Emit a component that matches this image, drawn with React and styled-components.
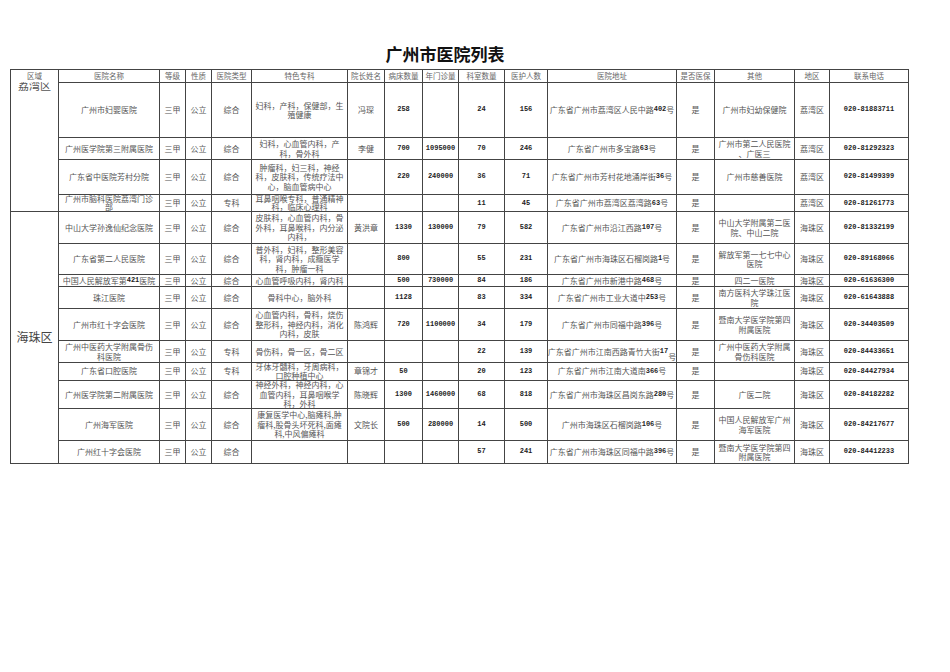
import React from 'react';
import styled, { createGlobalStyle } from 'styled-components';

const cols = [48, 101, 26, 26, 40, 96, 37, 38, 36, 46, 43, 129, 38, 80, 35, 79];

const headers = ['医院名称', '等级', '性质', '医院类型', '特色专科', '院长姓名', '病床数量', '年门诊量', '科室数量', '医护人数', '医院地址', '是否医保', '其他', '地区', '联系电话'];

const keys = ['name', 'level', 'kind', 'type', 'spec', 'head', 'beds', 'visits', 'depts', 'staff', 'addr', 'ins', 'other', 'area', 'tel'];
const numeric = ['beds', 'visits', 'depts', 'staff', 'tel'];

const liwan = [
  { h: 55, name: '广州市妇婴医院', type: '综合', spec: '妇科，产科，保健部，生\n殖健康', head: '冯琛', beds: '258', visits: '', depts: '24', staff: '156', addr: '广东省广州市荔湾区人民中路402号', other: '广州市妇幼保健院', area: '荔湾区', tel: '020-81883711' },
  { h: 22, name: '广州医学院第三附属医院', type: '综合', spec: '妇科，心血管内科，产\n科，骨外科', head: '李健', beds: '700', visits: '1095000', depts: '70', staff: '246', addr: '广东省广州市多宝路63号', other: '广州市第二人民医院\n、广医三', area: '荔湾区', tel: '020-81292323' },
  { h: 35, name: '广东省中医院芳村分院', type: '综合', spec: '肿瘤科，妇三科，神经\n科，皮肤科，传统疗法中\n心，脑血管病中心', head: '', beds: '220', visits: '240000', depts: '36', staff: '71', addr: '广东省广州市芳村花地涌岸街36号', other: '广州市慈善医院', area: '荔湾区', tel: '020-81499399' },
  { h: 17, lh: 8, name: '广州市脑科医院荔湾门诊\n部', type: '专科', spec: '耳鼻咽喉专科，普通精神\n科，临床心理科', head: '', beds: '', visits: '', depts: '11', staff: '45', addr: '广东省广州市荔湾区荔湾路63号', other: '', area: '荔湾区', tel: '020-81261773' },
];

const haizhu = [
  { h: 32, name: '中山大学孙逸仙纪念医院', type: '综合', spec: '皮肤科，心血管内科，骨\n外科，耳鼻喉科，内分泌\n内科，', head: '黄洪章', beds: '1330', visits: '130000', depts: '79', staff: '582', addr: '广东省广州市沿江西路107号', other: '中山大学附属第二医\n院、中山二院', area: '海珠区', tel: '020-81332199' },
  { h: 31, name: '广东省第二人民医院', type: '综合', spec: '普外科，妇科，整形美容\n科，肾内科，成瘾医学\n科，肿瘤一科', head: '', beds: '800', visits: '', depts: '55', staff: '231', addr: '广东省广州市海珠区石榴岗路1号', other: '解放军第一七七中心\n医院', area: '海珠区', tel: '020-89168066' },
  { h: 12, name: '中国人民解放军第421医院', type: '综合', spec: '心血管呼吸内科，肾内科', head: '', beds: '500', visits: '730000', depts: '84', staff: '186', addr: '广东省广州市新港中路468号', other: '四二一医院', area: '海珠区', tel: '020-61636300' },
  { h: 22, name: '珠江医院', type: '综合', spec: '骨科中心，脑外科', head: '', beds: '1128', visits: '', depts: '83', staff: '334', addr: '广东省广州市工业大道中253号', other: '南方医科大学珠江医\n院', area: '海珠区', tel: '020-61643888' },
  { h: 32, name: '广州市红十字会医院', type: '综合', spec: '心血管内科，骨科，烧伤\n整形科，神经内科，消化\n内科，皮肤', head: '陈鸿辉', beds: '720', visits: '1100000', depts: '34', staff: '179', addr: '广东省广州市同福中路396号', other: '暨南大学医学院第四\n附属医院', area: '海珠区', tel: '020-34403509' },
  { h: 22, name: '广州中医药大学附属骨伤\n科医院', type: '专科', spec: '骨伤科，骨一区，骨二区', head: '', beds: '', visits: '', depts: '22', staff: '139', addr: '广东省广州市江南西路青竹大街17\n号', other: '广州中医药大学附属\n骨伤科医院', area: '海珠区', tel: '020-84433651' },
  { h: 18, lh: 8.5, name: '广东省口腔医院', type: '专科', spec: '牙体牙髓科，牙周病科，\n口腔种植中心', head: '章锦才', beds: '50', visits: '', depts: '20', staff: '123', addr: '广东省广州市江南大道南366号', other: '', area: '海珠区', tel: '020-84427934' },
  { h: 28, name: '广州医学院第二附属医院', type: '综合', spec: '神经外科，神经内科，心\n血管内科，耳鼻咽喉学\n科，外科', head: '陈晓辉', beds: '1300', visits: '1460000', depts: '68', staff: '818', addr: '广东省广州市海珠区昌岗东路280号', other: '广医二院', area: '海珠区', tel: '020-84182282' },
  { h: 32, name: '广州海军医院', type: '综合', spec: '康复医学中心,脑瘫科,肿\n瘤科,股骨头坏死科,面瘫\n科,中风偏瘫科', head: '文院长', beds: '500', visits: '280000', depts: '14', staff: '500', addr: '广州市海珠区石榴岗路106号', other: '中国人民解放军广州\n海军医院', area: '海珠区', tel: '020-84217677' },
  { h: 23, name: '广州红十字会医院', type: '综合', spec: '', head: '', beds: '', visits: '', depts: '57', staff: '241', addr: '广东省广州市海珠区同福中路396号', other: '暨南大学医学院第四\n附属医院', area: '海珠区', tel: '020-84412233' },
];

const GlobalStyle = createGlobalStyle`
  body {
    margin: 0;
    background: #ffffff;
    font-family: "Noto Sans CJK SC", "Noto Sans", sans-serif;
  }
`

const Page = styled.div`
  padding: 44px 0 0 10px;
`

const Title = styled.h1`
  box-sizing: border-box;
  width: 898px;
  margin: 0 0 5px;
  padding-right: 28px;
  text-align: center;
  font-size: 17px;
  line-height: 20px;
  font-weight: 700;
  color: #111;
`

const Sheet = styled.table`
  table-layout: fixed;
  border-collapse: collapse;
  width: 898px;
  border: 1.5px solid #333;
`

const Col = styled.col`
  width: ${p => p.$w}px;
`

const Row = styled.tr`
  height: ${p => p.$h}px;
`

const Td = styled.td`
  border: 1px solid #444;
  padding: 0;
  vertical-align: ${p => (p.$top ? 'top' : 'middle')};
`

const Box = styled.div`
  height: ${p => p.$h - 1}px;
  display: flex;
  align-items: center;
  justify-content: center;
  overflow: hidden;
  text-align: center;
  white-space: pre;
  font-size: ${p => (p.$head ? 7.5 : 8)}px;
  line-height: ${p => p.$lh || 9.5}px;
  color: ${p => (p.$head ? '#666' : '#555')};
`

const Num = styled.span`
  font-family: "Liberation Mono", "DejaVu Sans Mono", monospace;
  font-weight: 700;
  font-size: 7px;
  color: #222;
`

const AreaHead = styled.div`
  height: 12px;
  line-height: 12px;
  text-align: center;
  font-size: 7.5px;
  color: #666;
`

const ClippedArea = styled.div`
  height: 9px;
  overflow: hidden;
  display: flex;
  align-items: flex-end;
  justify-content: center;
  font-size: 11px;
  line-height: 11px;
  color: #555;
`

const BigArea = styled.div`
  text-align: center;
  font-size: 12px;
  color: #444;
  padding-bottom: 2px;
`

const fmt = (text) =>
  text.split(/(\d+)/).map((part, i) => (i % 2 ? <Num key={i}>{part}</Num> : part));

function DataRow({ row, lead }) {
  const full = { level: '三甲', kind: '公立', ins: '是', ...row };
  return (
    <Row $h={row.h}>
      {lead}
      {keys.map(k => (
        <Td key={k}>
          <Box $h={row.h} $lh={row.lh}>
            {numeric.includes(k) ? <Num>{full[k]}</Num> : fmt(full[k])}
          </Box>
        </Td>
      ))}
    </Row>
  );
}

export default function App() {
  return (
    <Page>
      <GlobalStyle />
      <Title>广州市医院列表</Title>
      <Sheet>
        <colgroup>
          {cols.map((w, i) => <Col key={i} $w={w} />)}
        </colgroup>
        <tbody>
          <Row $h={13}>
            <Td rowSpan={5} $top>
              <AreaHead>区域</AreaHead>
              <ClippedArea>荔湾区</ClippedArea>
            </Td>
            {headers.map(h => (
              <Td key={h}>
                <Box $h={13} $head>{h}</Box>
              </Td>
            ))}
          </Row>
          {liwan.map((r, i) => <DataRow key={i} row={r} />)}
          {haizhu.map((r, i) => (
            <DataRow
              key={i}
              row={r}
              lead={i === 0 ? (
                <Td rowSpan={haizhu.length}>
                  <BigArea>海珠区</BigArea>
                </Td>
              ) : null}
            />
          ))}
        </tbody>
      </Sheet>
    </Page>
  );
}
